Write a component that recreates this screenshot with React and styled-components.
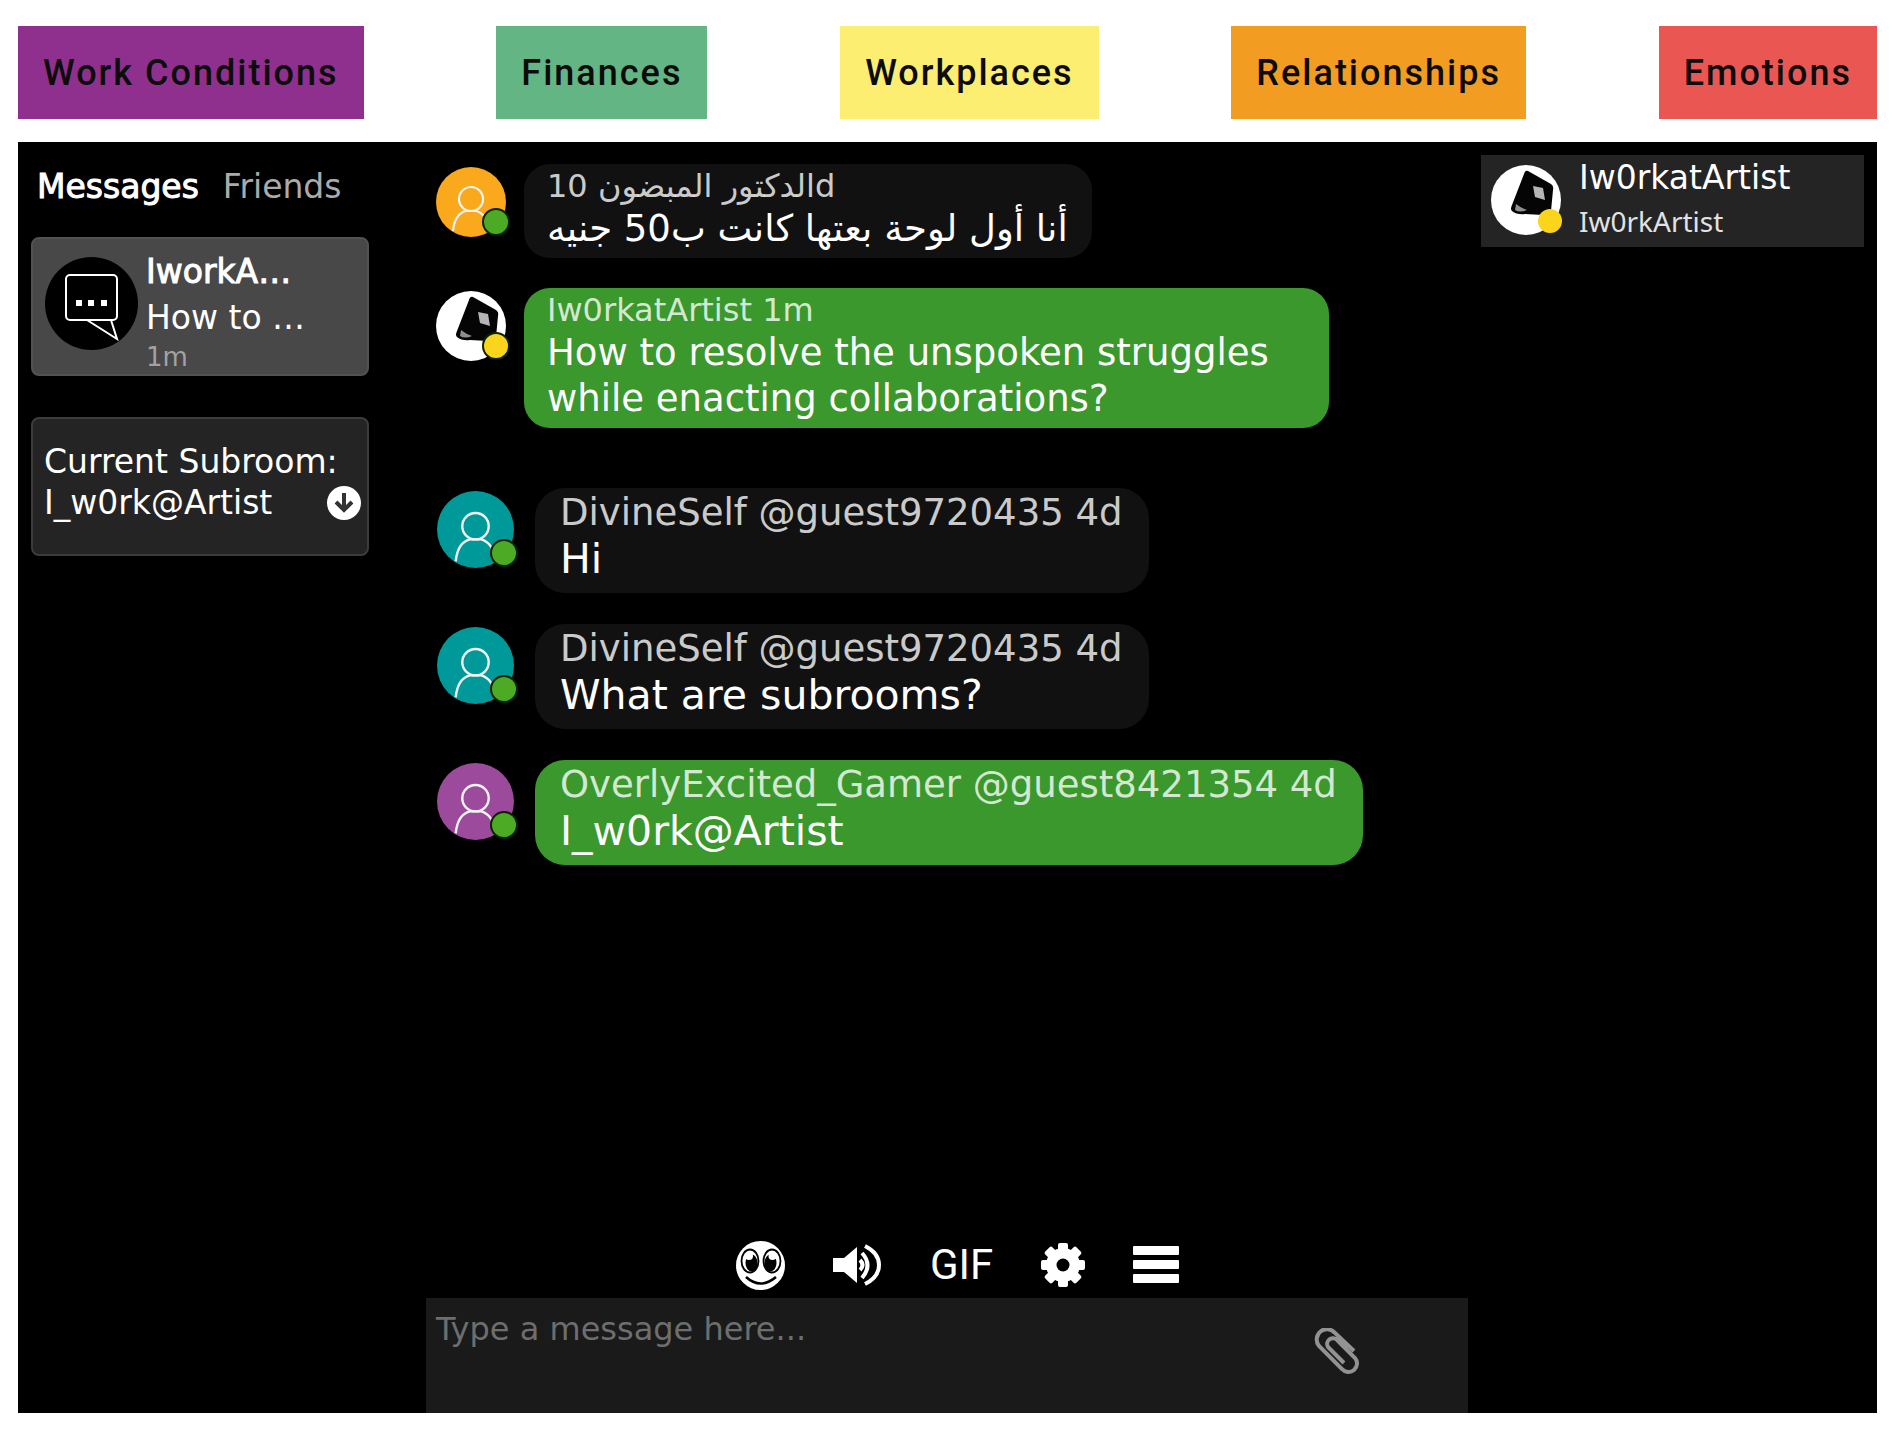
import React from "react";
import styled, { createGlobalStyle } from "styled-components";

const GlobalStyle = createGlobalStyle`
  * {
    box-sizing: border-box;
  }

  body {
    margin: 0;
    background: #ffffff;
    font-family: "DejaVu Sans", sans-serif;
  }

  button {
    border: none;
    padding: 0;
    background: none;
    color: inherit;
    font: inherit;
    cursor: pointer;
  }
`;

const Page = styled.div`
  display: flex;
  flex-direction: column;
  min-height: 100vh;
  padding: 26px 22px 24px 18px;
`;

const TopicNav = styled.nav`
  display: flex;
  justify-content: space-between;
  margin-bottom: 23px;
`;

const TopicButton = styled.button`
  && {
    height: 93px;
    padding: 0 25px;
    background: ${({ $color }) => $color};
    color: #0c0c0c;
    font-family: Roboto, sans-serif;
    font-size: 36px;
    font-weight: 500;
    letter-spacing: 2px;
  }
`;

const Chat = styled.main`
  flex: 1;
  display: grid;
  grid-template-columns: 408px minmax(0, 1fr) 409px;
  background: #000000;
  color: #ffffff;
`;

const Sidebar = styled.aside`
  padding: 22px 57px 0 13px;
`;

const Tabs = styled.div`
  display: flex;
  gap: 24px;
  padding-left: 6px;
  margin-bottom: 27px;
`;

const Tab = styled.button`
  && {
    font-size: 33px;
    line-height: 46px;
    color: ${({ $active }) => ($active ? "#ffffff" : "#ababab")};
    -webkit-text-stroke: ${({ $active }) => ($active ? "1px" : "0")};
  }
`;

const Card = styled.section`
  display: flex;
  align-items: flex-start;
  height: 139px;
  margin-bottom: 41px;
  border: 2px solid ${({ $active }) => ($active ? "#525252" : "#3c3c3c")};
  border-radius: 8px;
  background: ${({ $active }) => ($active ? "#484848" : "#242424")};
  padding: ${({ $active }) => ($active ? "10px 12px 0" : "22px 6px 0 11px")};
  gap: 8px;
`;

const CardText = styled.div`
  flex: 1;
  font-size: 33px;
  line-height: 41px;
  white-space: nowrap;
`;

const RoomTitle = styled.div`
  line-height: 46px;
  -webkit-text-stroke: 1px;
`;

const RoomPreview = styled.div`
  line-height: 46px;
`;

const RoomTime = styled.div`
  font-size: 26px;
  line-height: 32px;
  color: #a2a2a2;
`;

const SubroomRow = styled.div`
  display: flex;
  align-items: center;
  justify-content: space-between;
`;

const IconButton = styled.button`
  display: flex;
  align-items: center;
`;

const Conversation = styled.section`
  display: flex;
  flex-direction: column;
`;

const MessageGroup = styled.ul`
  display: flex;
  flex-direction: column;
  gap: ${({ $large }) => ($large ? 31 : 30)}px;
  margin: 0;
  padding: ${({ $large }) => ($large ? "60px 0 0 11px" : "22px 0 0 10px")};
  list-style: none;
`;

const MessageRow = styled.li`
  display: flex;
  align-items: flex-start;
  gap: ${({ $large }) => ($large ? 21 : 18)}px;
`;

const AvatarBox = styled.div`
  position: relative;
  flex: none;
  width: ${({ $size }) => $size}px;
  height: ${({ $size }) => $size}px;
  margin-top: 3px;

  svg {
    display: block;
    width: 100%;
    height: 100%;
    border-radius: 50%;
    background: ${({ $color }) => $color};
  }
`;

const RoomAvatar = styled(AvatarBox)`
  margin-top: 8px;
`;

const StatusDot = styled.span`
  position: absolute;
  right: ${({ $inset }) => ($inset ? -1 : -4)}px;
  bottom: ${({ $inset }) => ($inset ? 2 : 1)}px;
  width: ${({ $inset }) => ($inset ? 24 : 28)}px;
  height: ${({ $inset }) => ($inset ? 24 : 28)}px;
  border: ${({ $inset }) => ($inset ? "none" : "2px solid #0a2400")};
  border-radius: 50%;
  background: ${({ $away }) => ($away ? "#fbd51c" : "#4caa24")};
`;

const Bubble = styled.div`
  max-width: ${({ $large }) => ($large ? "100%" : "78%")};
  padding: ${({ $large }) => ($large ? "3px 26px 9px 25px" : "2px 24px 6px 23px")};
  border-radius: ${({ $large }) => ($large ? 30 : 26)}px;
  background: ${({ $own }) => ($own ? "#3a982c" : "#111111")};
`;

const Author = styled.div`
  font-size: ${({ $large }) => ($large ? 37 : 32)}px;
  line-height: ${({ $large }) => ($large ? 44 : 40)}px;
  color: rgba(255, 255, 255, 0.8);
`;

const Body = styled.div`
  font-size: ${({ $large }) => ($large ? 41 : 37)}px;
  line-height: ${({ $large }) => ($large ? 49 : 46)}px;
`;

const Toolbar = styled.div`
  display: flex;
  align-items: center;
  justify-content: center;
  gap: 48px;
  height: 66px;
  margin-top: auto;
  padding-left: 21px;
`;

const GifButton = styled.button`
  && {
    font-family: Roboto, sans-serif;
    font-size: 42px;
    line-height: 48px;
  }
`;

const Composer = styled.form`
  display: flex;
  align-items: center;
  height: 115px;
  padding-right: 109px;
  background: #1a1a1a;
`;

const AttachButton = styled(IconButton)`
  padding-bottom: 8px !important;
`;

const MessageInput = styled.textarea`
  flex: 1;
  align-self: stretch;
  padding: 11px 10px;
  border: none;
  outline: none;
  resize: none;
  background: transparent;
  color: #ffffff;
  font-family: inherit;
  font-size: 32px;
  line-height: 40px;

  &::placeholder {
    color: #6e6e6e;
    opacity: 1;
  }
`;

const People = styled.aside`
  padding: 13px;
`;

const Person = styled.div`
  display: flex;
  align-items: flex-start;
  gap: 18px;
  height: 92px;
  padding: 7px 10px 0;
  background: #242424;
`;

const PersonName = styled.div`
  font-size: 33px;
  line-height: 32px;
`;

const PersonHandle = styled.div`
  color: #e2e2e2;
  font-family: "Noto Sans", sans-serif;
  font-size: 28px;
  line-height: 54px;
`;

function PersonIcon() {
  return (
    <svg viewBox="0 0 70 70" fill="none" stroke="#f4f4f4" strokeWidth="2.2">
      <circle cx="35" cy="32" r="12" />
      <path d="M17 64C18 54 22 46 30 44H40C48 46 52 54 53 64" />
    </svg>
  );
}

function CubeIcon() {
  return (
    <svg viewBox="0 0 70 70">
      <path d="M37 6L60 19Q63 21 62 25L60 46Q58 50 52 50L34 49Q26 50 21 46Q19 44 21 40L33 9Q34 5 37 6Z" fill="#050505" />
      <path d="M42 21L52 23L54 35L44 32Z" fill="#b5b5b5" />
      <path d="M25 39Q30 43 36 45Q29 48 24 45Z" fill="#8f8f8f" />
    </svg>
  );
}

function SpeechIcon() {
  return (
    <svg viewBox="0 0 93 93" fill="none" stroke="#ffffff" strokeWidth="2">
      <rect x="21" y="18" width="51" height="45" rx="4" />
      <path d="M42 63L72 82L66 63" />
      <path d="M31 43h6v6h-6zM43 43h6v6h-6zM56 43h6v6h-6z" fill="#ffffff" stroke="none" />
    </svg>
  );
}

function ArrowIcon() {
  return (
    <svg width="34" height="34" viewBox="0 0 34 34" fill="none">
      <circle cx="17" cy="17" r="17" fill="#ffffff" />
      <path d="M17 7V24M9 16L17 24L25 16" stroke="#333333" strokeWidth="4" />
    </svg>
  );
}

function SmileIcon() {
  return (
    <svg width="49" height="49" viewBox="0 0 49 49" fill="none">
      <circle cx="24.5" cy="24.5" r="24.5" fill="#ffffff" />
      <g stroke="#000000" strokeWidth="1.8">
        <ellipse cx="14" cy="20" rx="8.5" ry="11.5" />
        <ellipse cx="36" cy="20" rx="8.5" ry="11.5" />
        <path d="M10 36Q24.5 49 40 36" strokeWidth="2.5" />
      </g>
      <ellipse cx="15.5" cy="22" rx="6" ry="8.5" fill="#000000" />
      <ellipse cx="34.5" cy="22" rx="6" ry="8.5" fill="#000000" />
      <circle cx="13" cy="15" r="4" fill="#ffffff" />
      <circle cx="36.5" cy="15" r="4" fill="#ffffff" />
    </svg>
  );
}

function SpeakerIcon() {
  return (
    <svg width="49" height="42" viewBox="0 0 49 42" fill="none">
      <path d="M0 14H11L24 3V39L11 28H0Z" fill="#ffffff" />
      <g stroke="#ffffff" strokeWidth="4">
        <path d="M27 16Q32 21 27 26" />
        <path d="M29 9Q40 21 29 34" />
        <path d="M32 2Q46 9 46 21T32 40" />
      </g>
    </svg>
  );
}

function GearIcon() {
  return (
    <svg width="44" height="44" viewBox="-22 -22 44 44">
      {[0, 45, 90, 135].map((angle) => (
        <rect
          key={angle}
          x="-5"
          y="-22"
          width="10"
          height="44"
          rx="2"
          fill="#ffffff"
          transform={`rotate(${angle})`}
        />
      ))}
      <circle r="17" fill="#ffffff" />
      <circle r="6.5" fill="#000000" />
    </svg>
  );
}

function MenuIcon() {
  return (
    <svg width="46" height="38" viewBox="0 0 46 38" fill="#ffffff">
      <rect width="46" height="9" rx="1" />
      <rect y="14" width="46" height="9" rx="1" />
      <rect y="28" width="46" height="9" rx="1" />
    </svg>
  );
}

function ClipIcon() {
  return (
    <svg width="45" height="47" viewBox="0 0 45 47" fill="none" stroke="#929292" strokeWidth="4">
      <path d="M40 23L21 5A10 10 0 0 0 5 18L28 41A8 8 0 0 0 41 30L24 13A5 5 0 0 0 14 19L30 35" />
    </svg>
  );
}

function Avatar({ size, color, cube, away, inset }) {
  return (
    <AvatarBox $size={size} $color={color}>
      {cube ? <CubeIcon /> : <PersonIcon />}
      <StatusDot $away={away} $inset={inset} />
    </AvatarBox>
  );
}

function Message({ message, large }) {
  return (
    <MessageRow $large={large}>
      <Avatar
        size={large ? 77 : 70}
        color={message.color}
        cube={message.cube}
        away={message.away}
      />
      <Bubble $own={message.own} $large={large}>
        <Author $large={large}>{`${message.author} ${message.time}`}</Author>
        <Body $large={large}>{message.text}</Body>
      </Bubble>
    </MessageRow>
  );
}

const topics = [
  { name: "Work Conditions", color: "#8f308e" },
  { name: "Finances", color: "#63b584" },
  { name: "Workplaces", color: "#fcee71" },
  { name: "Relationships", color: "#f39c22" },
  { name: "Emotions", color: "#ea5752" },
];

const recentMessages = [
  {
    id: 1,
    author: "الدكتور المبضون",
    time: "10d",
    text: "أنا أول لوحة بعتها كانت ب50 جنيه",
    color: "#f9a91b",
  },
  {
    id: 2,
    author: "Iw0rkatArtist",
    time: "1m",
    text: "How to resolve the unspoken struggles while enacting collaborations?",
    color: "#ffffff",
    cube: true,
    away: true,
    own: true,
  },
];

const guestMessages = [
  {
    id: 3,
    author: "DivineSelf @guest9720435",
    time: "4d",
    text: "Hi",
    color: "#009999",
  },
  {
    id: 4,
    author: "DivineSelf @guest9720435",
    time: "4d",
    text: "What are subrooms?",
    color: "#009999",
  },
  {
    id: 5,
    author: "OverlyExcited_Gamer @guest8421354",
    time: "4d",
    text: "I_w0rk@Artist",
    color: "#9c4a9c",
    own: true,
  },
];

export default function App() {
  return (
    <Page>
      <GlobalStyle />
      <TopicNav>
        {topics.map(({ name, color }) => (
          <TopicButton key={name} type="button" $color={color}>
            {name}
          </TopicButton>
        ))}
      </TopicNav>

      <Chat>
        <Sidebar>
          <Tabs>
            <Tab type="button" $active>
              Messages
            </Tab>
            <Tab type="button">Friends</Tab>
          </Tabs>

          <Card $active>
            <RoomAvatar $size={93} $color="#000000">
              <SpeechIcon />
            </RoomAvatar>
            <CardText>
              <RoomTitle>IworkA…</RoomTitle>
              <RoomPreview>How to …</RoomPreview>
              <RoomTime>1m</RoomTime>
            </CardText>
          </Card>

          <Card>
            <CardText>
              Current Subroom:
              <SubroomRow>
                I_w0rk@Artist
                <IconButton type="button" aria-label="Change subroom">
                  <ArrowIcon />
                </IconButton>
              </SubroomRow>
            </CardText>
          </Card>
        </Sidebar>

        <Conversation>
          <MessageGroup>
            {recentMessages.map((message) => (
              <Message key={message.id} message={message} />
            ))}
          </MessageGroup>
          <MessageGroup $large>
            {guestMessages.map((message) => (
              <Message key={message.id} message={message} large />
            ))}
          </MessageGroup>

          <Toolbar>
            <IconButton type="button" aria-label="Emoji">
              <SmileIcon />
            </IconButton>
            <IconButton type="button" aria-label="Sound">
              <SpeakerIcon />
            </IconButton>
            <GifButton type="button">GIF</GifButton>
            <IconButton type="button" aria-label="Settings">
              <GearIcon />
            </IconButton>
            <IconButton type="button" aria-label="Menu">
              <MenuIcon />
            </IconButton>
          </Toolbar>

          <Composer>
            <MessageInput aria-label="Message" placeholder="Type a message here..." />
            <AttachButton type="button" aria-label="Attach a file">
              <ClipIcon />
            </AttachButton>
          </Composer>
        </Conversation>

        <People>
          <Person>
            <Avatar size={70} color="#ffffff" cube away inset />
            <div>
              <PersonName>Iw0rkatArtist</PersonName>
              <PersonHandle>Iw0rkArtist</PersonHandle>
            </div>
          </Person>
        </People>
      </Chat>
    </Page>
  );
}
